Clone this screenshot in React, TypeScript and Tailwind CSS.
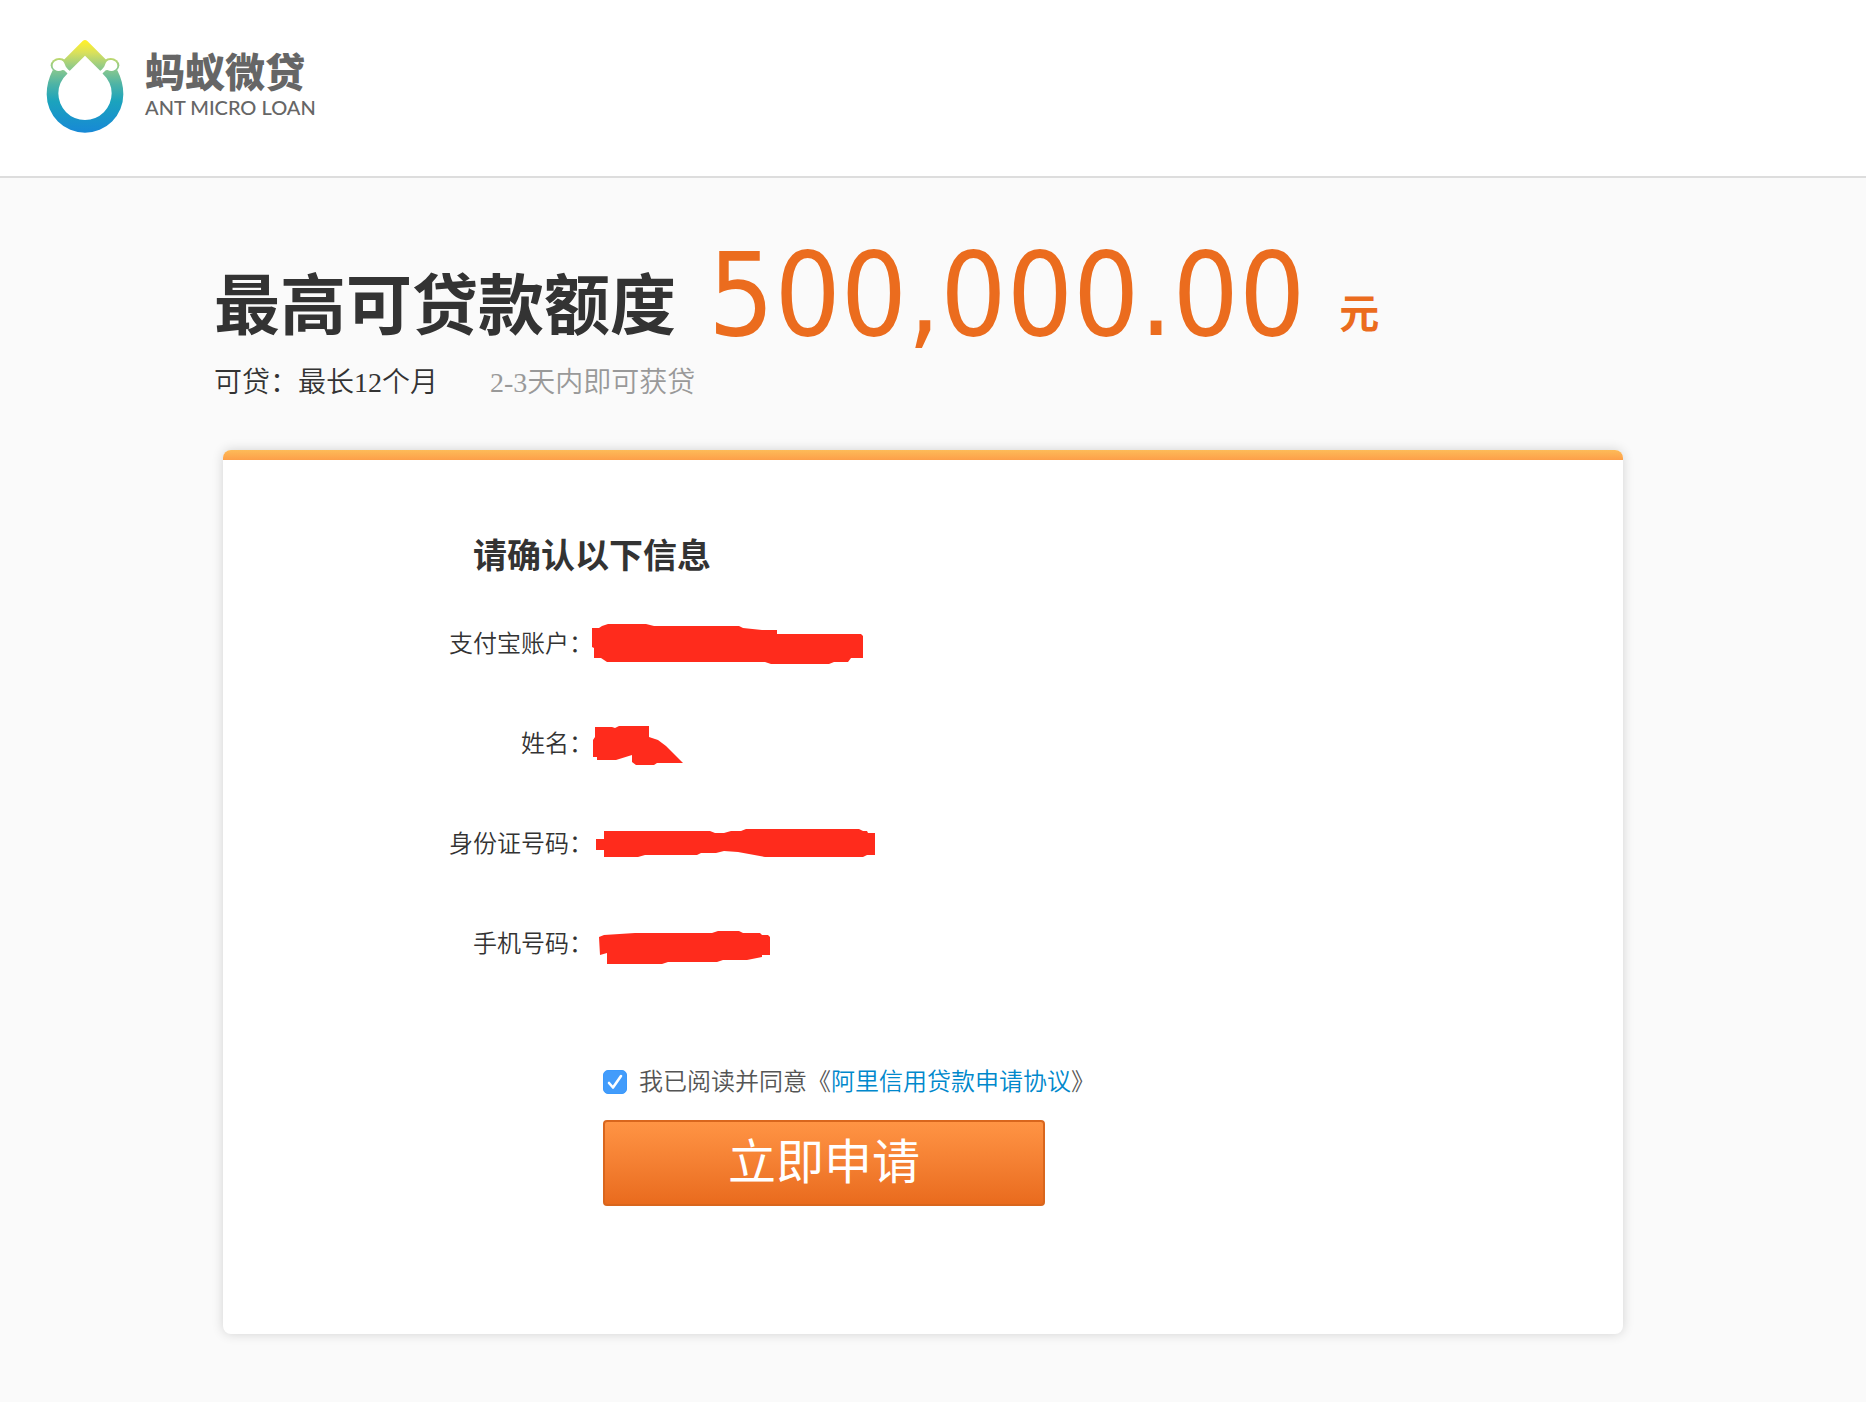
const sans = "font-['Liberation_Serif','Noto_Sans_CJK_SC',sans-serif]";

function Logo() {
  return (
    <svg viewBox="45 50 240 294" className="h-[98px] w-[80px]" aria-hidden="true">
      <defs>
        <linearGradient id="drop" gradientUnits="userSpaceOnUse" x1="0" y1="58" x2="0" y2="338">
          <stop offset="0.02" stopColor="#fff02a" />
          <stop offset="0.14" stopColor="#d9e05c" />
          <stop offset="0.3" stopColor="#8fca8a" />
          <stop offset="0.48" stopColor="#4db3a6" />
          <stop offset="0.66" stopColor="#1ba3bd" />
          <stop offset="1" stopColor="#1788d6" />
        </linearGradient>
      </defs>
      <g fill="url(#drop)">
        <path d="M158 62Q165 56 172 62L229 119L236 126L226 142L212 153L165 106L118 153L104 142L94 126L101 119Z" />
        <path d="M68 150L102 150L114 158Q85 185 85 219A80 80 0 0 0 245 219Q245 185 216 158L228 150L262 150Q280 185 280 222A115 115 0 0 1 50 222Q50 185 68 150Z" />
        <ellipse cx="88" cy="135" rx="26" ry="22" />
        <ellipse cx="242" cy="135" rx="26" ry="22" />
      </g>
      <g fill="#fff">
        <path d="M68 136C68 126 77 119 88 119C98 119 102 125 105 133C107 140 112 146 121 153L112 160C108 153 104 149 98 149C90 152 82 153 76 149C71 146 68 142 68 136Z" />
        <path d="M262 136C262 126 253 119 242 119C232 119 228 125 225 133C223 140 218 146 209 153L218 160C222 153 226 149 232 149C240 152 248 153 254 149C259 146 262 142 262 136Z" />
      </g>
    </svg>
  );
}

const rows = [
  { label: "支付宝账户：", view: "590 622 276 44", size: "w-[276px] h-[44px]", path: "M592 628H599L602 626L608 624H646L654 626H739L743 628L762 630H777V634H861L863 636V658H851L848 662H834L829 664H771L765 662H607L601 658H594V648L592 647Z" },
  { label: "姓名：", view: "590 722 276 44", size: "w-[276px] h-[44px]", path: "M595 727H612L615 728L619 726H649V737L658 740L666 746L683 763H657L654 765H636L632 762V755L616 760H597V757H593V740L595 737Z" },
  { label: "身份证号码：", view: "590 822 286 44", size: "w-[286px] h-[44px]", path: "M596 839H604V831H710L715 833H724L731 831H741L746 829H859L863 831H867L868 833H875V855H867L863 857H765L738 852L724 851L716 853H701L697 855H645L638 857H604V850H596Z" },
  { label: "手机号码：", view: "590 922 276 44", size: "w-[276px] h-[44px]", path: "M599 937L604 935L635 933H712L718 931H739L743 933H760L762 935H768L770 937V955H762V957L747 960H723L717 962H668L662 964H607V953L600 955Z" },
];

export default function App() {
  return (
    <div className={`min-h-screen bg-[#fafafa] text-[#333] ${sans}`}>
      <header className="flex h-[178px] items-start gap-5 border-b-2 border-[#ddd] bg-white pt-[37px] pl-[45px]">
        <Logo />
        <div className="flex flex-col pt-4 text-[#666]">
          <span className="text-[40px] leading-[42px] font-black">蚂蚁微贷</span>
          <span className="font-['Lato',sans-serif] text-[20px] leading-6 font-medium">ANT MICRO LOAN</span>
        </div>
      </header>

      <main className="pr-5 pb-[68px]">
        <div className="mx-auto max-w-[1418px]">
          <div className="flex h-[180px] pt-14">
            <h1 className="text-[66px] leading-[146px] font-semibold">最高可贷款额度</h1>
            <span className="ml-8 font-['DejaVu_Sans_Condensed','DejaVu_Sans',sans-serif] text-[116px] leading-[122px] text-[#eb6c1e]">500,000.00</span>
            <span className="ml-[34px] text-[40px] leading-[162px] font-semibold text-[#eb6c1e]">元</span>
          </div>
          <p className="flex h-[92px] gap-[52px] text-[28px] leading-[50px] font-[350]">
            <span>可贷：最长12个月</span>
            <span className="text-[#999]">2-3天内即可获贷</span>
          </p>

          <section className="mx-[9px] overflow-hidden rounded-lg bg-white pb-32 shadow-[0_0_12px_rgba(0,0,0,0.16)]">
            <div className="h-[10px] bg-linear-to-b from-[#fdbb58] to-[#fd9f49]" />
            <h2 className="mt-[72px] ml-[250px] text-[34px] leading-[50px] font-semibold">请确认以下信息</h2>
            <dl className="mt-3">
              {rows.map((row) => (
                <div key={row.label} className="flex h-[100px] items-center">
                  <dt className="w-[370px] shrink-0 text-right text-2xl font-[350]">{row.label}</dt>
                  <dd className="-ml-[3px]">
                    <svg viewBox={row.view} className={row.size} aria-label="已隐藏" role="img">
                      <path d={row.path} fill="#ff2b1c" />
                    </svg>
                  </dd>
                </div>
              ))}
            </dl>
            <form className="mt-[62px] ml-[380px]" onSubmit={(e) => e.preventDefault()}>
              <div className="flex h-[52px] items-center text-2xl font-[350] text-[#555]">
                <span className="relative mr-3 flex size-6">
                  <input id="agree" type="checkbox" defaultChecked className="peer size-6 appearance-none rounded-[5px] border border-[#3b99fc] bg-white checked:bg-[#429cfb]" />
                  <svg viewBox="0 0 24 24" className="pointer-events-none absolute inset-0 hidden size-6 peer-checked:block" aria-hidden="true">
                    <path d="M6 13L10 17.5L18 6" fill="none" stroke="#fff" strokeWidth="2.6" strokeLinecap="round" strokeLinejoin="round" />
                  </svg>
                </span>
                <label htmlFor="agree">我已阅读并同意《</label>
                <a href="#agreement" className="text-[#08c]">阿里信用贷款申请协议</a>
                <span>》</span>
              </div>
              <button type="submit" className="mt-3 h-[86px] w-[442px] rounded border-2 border-[#d9661d] bg-linear-to-b from-[#ff9444] to-[#e96b1d] text-5xl text-white">
                立即申请
              </button>
            </form>
          </section>
        </div>
      </main>
    </div>
  );
}
